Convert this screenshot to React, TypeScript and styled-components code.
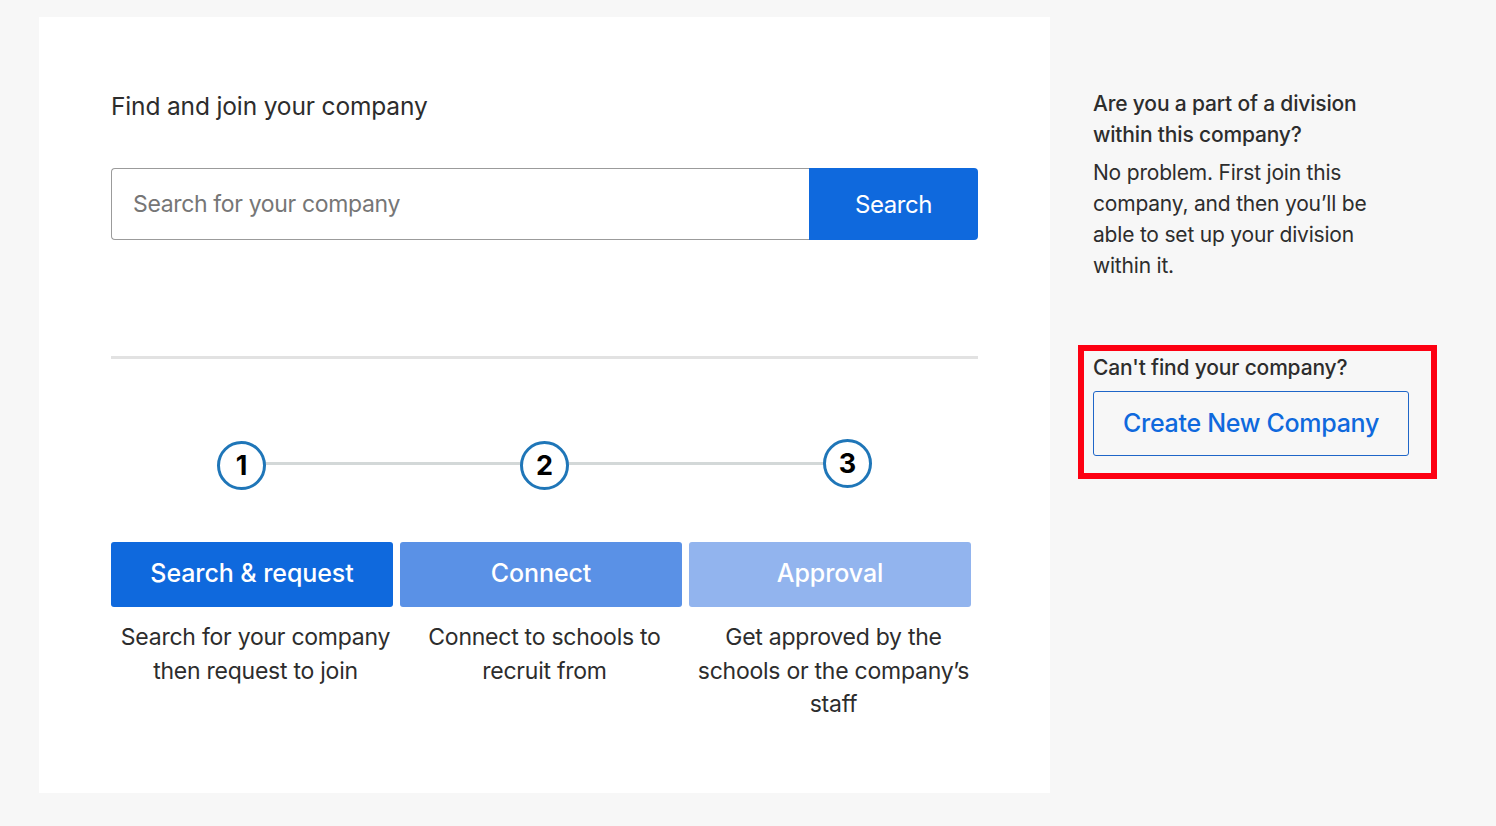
import React from "react";
import styled, { createGlobalStyle } from "styled-components";

const Global = createGlobalStyle`
  html, body { margin: 0; padding: 0; background: #f7f7f7; }
  body { font-family: Inter, "Liberation Sans", sans-serif; color: #2d2d2d; }
  * { box-sizing: border-box; }
`;

const Page = styled.div`
  width: 1496px;
  height: 826px;
  padding: 17px 0 33px 39px;
  display: flex;
  overflow: hidden;
`;

const Card = styled.main`
  width: 1011px;
  height: 776px;
  background: #fff;
  padding: 75px 72px 0;
`;

const Title = styled.h1`
  margin: 0;
  font-size: 24.5px;
  line-height: 28px;
  font-weight: 400;
  letter-spacing: -0.15px;
`;

const SearchRow = styled.div`
  display: flex;
  margin-top: 48px;
  width: 867px;
  height: 72px;
`;

const SearchInput = styled.input`
  flex: 1;
  min-width: 0;
  height: 100%;
  border: 1px solid #9b9b9b;
  border-right: none;
  border-radius: 4px 0 0 4px;
  padding: 0 22px 0 21px;
  font: 400 23px Inter, sans-serif;
  letter-spacing: -0.35px;
  outline: none;
  &::placeholder { color: #767676; opacity: 1; }
`;

const SearchButton = styled.button`
  width: 169px;
  border: none;
  border-radius: 0 4px 4px 0;
  background: #0f69dd;
  color: #fff;
  font: 400 24px Inter, sans-serif;
  letter-spacing: -0.45px;
  padding: 0;
`;

const Divider = styled.hr`
  width: 867px;
  margin: 116px 0 0;
  border: none;
  border-top: 3px solid #e2e2e2;
`;

const Stepper = styled.div`
  position: relative;
  width: 655px;
  margin: 80px 0 0 106px;
  height: 52px;
  display: flex;
  justify-content: space-between;
  align-items: flex-start;
`;

const StepLine = styled.div`
  position: absolute;
  left: 20px;
  right: 20px;
  top: 23px;
  height: 3px;
  background: #d3d8d8;
`;

const StepCircle = styled.div<{ $up?: boolean }>`
  position: relative;
  width: 49px;
  height: 49px;
  margin-top: ${(p) => (p.$up ? 0 : 2)}px;
  border: 3px solid #1f76b8;
  border-radius: 50%;
  background: #fff;
  color: #000;
  font-size: 27px;
  font-weight: 700;
  display: flex;
  align-items: center;
  justify-content: center;
`;

const Columns = styled.div`
  display: grid;
  grid-template-columns: repeat(3, 289px);
  margin-top: 51px;
`;

const Column = styled.div`
  display: flex;
  flex-direction: column;
`;

const StepHead = styled.div<{ $tone: string }>`
  width: 282px;
  height: 65px;
  padding-bottom: 3px;
  border-radius: 3px;
  background: ${(p) => p.$tone};
  color: #fff;
  font-size: 25px;
  font-weight: 500;
  letter-spacing: -0.08px;
  display: flex;
  align-items: center;
  justify-content: center;
`;

const StepText = styled.p`
  margin: 14px 0 0;
  font-size: 23px;
  line-height: 33.5px;
  letter-spacing: -0.25px;
  text-align: center;
  white-space: nowrap;
`;

const Side = styled.aside`
  width: 344px;
  margin-left: 43px;
  padding-top: 71px;
`;

const SideBold = styled.h2`
  margin: 0;
  font-size: 21px;
  line-height: 31px;
  font-weight: 500;
  letter-spacing: -0.17px;
  white-space: nowrap;
`;

const SideText = styled.p`
  margin: 7px 0 0;
  font-size: 21px;
  line-height: 31px;
  letter-spacing: -0.2px;
  white-space: nowrap;
`;

const Highlight = styled.section`
  margin: 64px 0 0 -15px;
  width: 359px;
  height: 134px;
  border: 6px solid #fd0012;
  padding: 1px 0 0 9px;
  display: flex;
  flex-direction: column;
`;

const CreateButton = styled.button`
  width: 316px;
  height: 65px;
  margin-top: 8px;
  padding: 0 0 2px;
  border: 1px solid #1f66c8;
  border-radius: 3px;
  background: transparent;
  color: #0f69dd;
  font: 500 25px Inter, sans-serif;
  letter-spacing: -0.3px;
`;

const steps = [
  { n: "1", title: "Search & request", tone: "#0f69dd", text: ["Search for your company", "then request to join"] },
  { n: "2", title: "Connect", tone: "#5a91e6", text: ["Connect to schools to", "recruit from"] },
  { n: "3", title: "Approval", tone: "#92b4ee", text: ["Get approved by the", "schools or the company’s", "staff"] },
];

export default function App() {
  return (
    <>
      <Global />
      <Page>
        <Card>
          <Title>Find and join your company</Title>
          <SearchRow>
            <SearchInput placeholder="Search for your company" />
            <SearchButton>Search</SearchButton>
          </SearchRow>
          <Divider />
          <Stepper>
            <StepLine />
            {steps.map((s, i) => (
              <StepCircle key={s.n} $up={i === 2}>{s.n}</StepCircle>
            ))}
          </Stepper>
          <Columns>
            {steps.map((s) => (
              <Column key={s.n}>
                <StepHead $tone={s.tone}>{s.title}</StepHead>
                <StepText>
                  {s.text.map((t) => (
                    <React.Fragment key={t}>{t}<br /></React.Fragment>
                  ))}
                </StepText>
              </Column>
            ))}
          </Columns>
        </Card>
        <Side>
          <SideBold>Are you a part of a division<br />within this company?</SideBold>
          <SideText>No problem. First join this<br />company, and then you’ll be<br />able to set up your division<br />within it.</SideText>
          <Highlight>
            <SideBold>Can't find your company?</SideBold>
            <CreateButton>Create New Company</CreateButton>
          </Highlight>
        </Side>
      </Page>
    </>
  );
}
